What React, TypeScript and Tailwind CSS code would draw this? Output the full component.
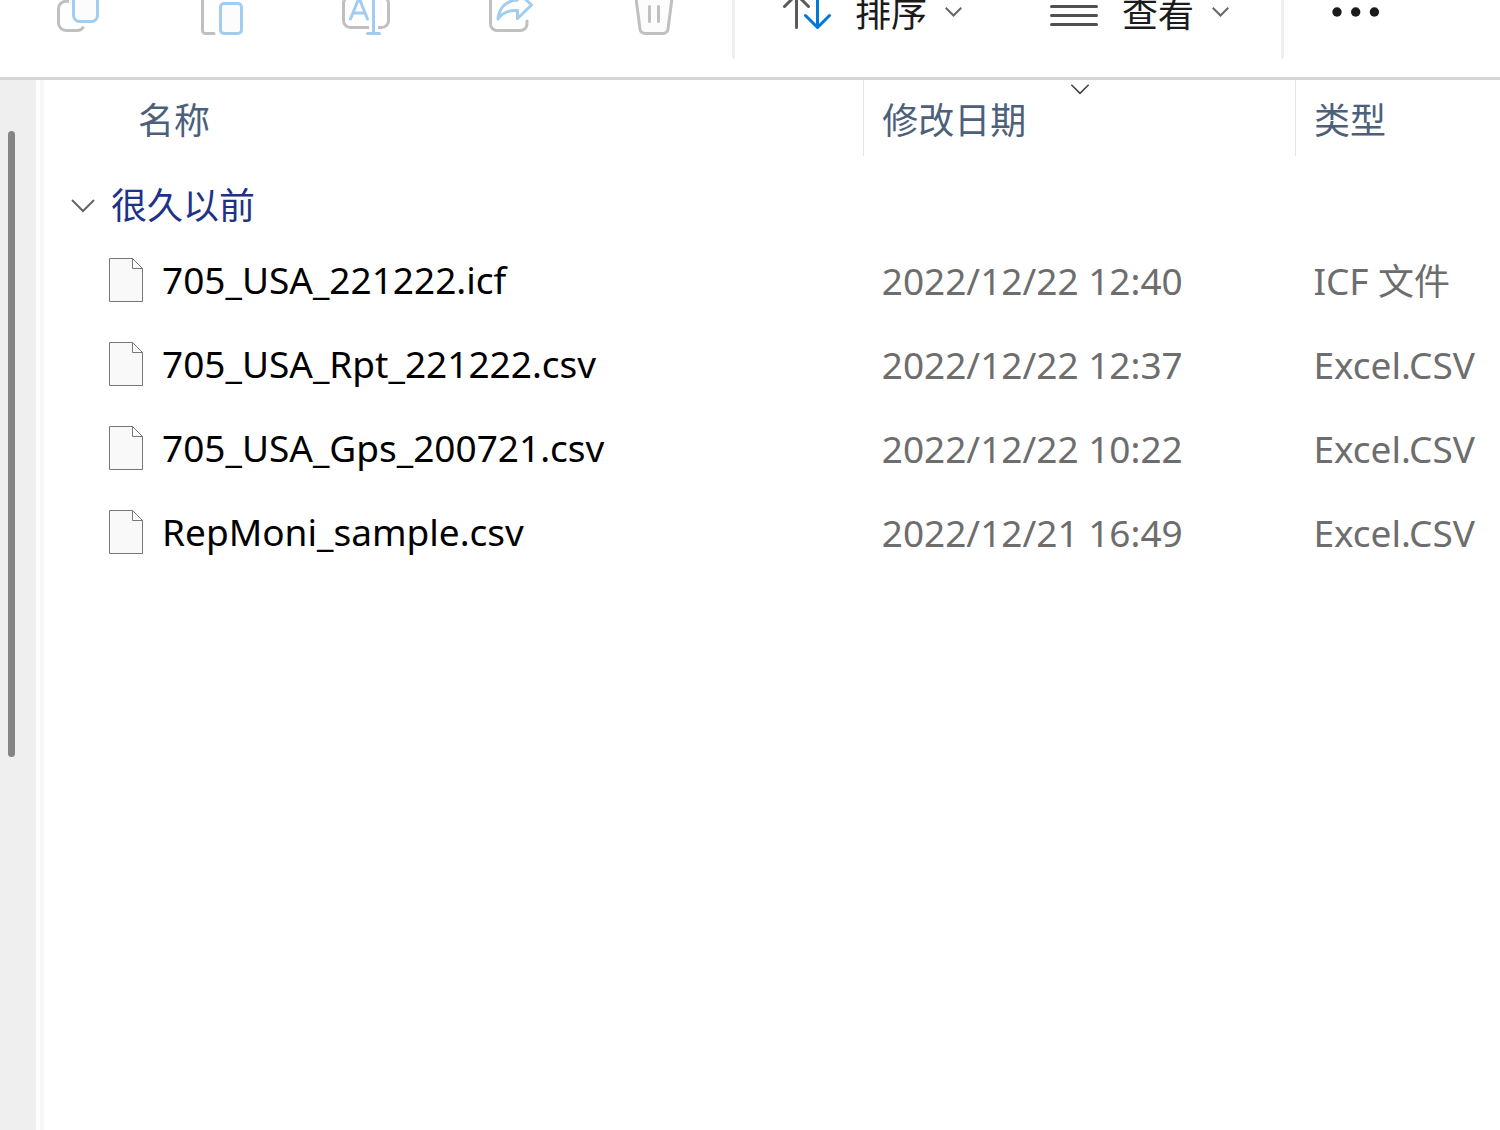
import type { ReactNode } from 'react';

const files = [
  { name: '705_USA_221222.icf', date: '2022/12/22 12:40', type: 'ICF', suffix: '文件' },
  { name: '705_USA_Rpt_221222.csv', date: '2022/12/22 12:37', type: 'Excel.CSV' },
  { name: '705_USA_Gps_200721.csv', date: '2022/12/22 10:22', type: 'Excel.CSV' },
  { name: 'RepMoni_sample.csv', date: '2022/12/21 16:49', type: 'Excel.CSV' },
];

function Icon({ children }: { children: ReactNode }) {
  return (
    <svg
      className="size-12 shrink-0"
      viewBox="0 0 48 48"
      fill="none"
      strokeWidth="3"
      strokeLinecap="round"
      strokeLinejoin="round"
      aria-hidden="true"
    >
      {children}
    </svg>
  );
}

const GRAY = '#c0c0c0';
const BLUE = '#a1cdf1';

function CopyIcon() {
  return (
    <Icon>
      <path d="M15 13.2h-3a7.5 7.5 0 0 0-7.5 7.5v14.3a7.5 7.5 0 0 0 7.5 7.5h11c3.500 0 5.500-1.500 6.500-4" stroke={GRAY} strokeLinecap="butt" />
      <rect x="19.500" y="1.500" width="24" height="32" rx="6" stroke={BLUE} fill="#fcfcfc" />
    </Icon>
  );
}

function PasteIcon() {
  return (
    <Icon>
      <path d="M16 45.500H7.500a3 3 0 0 1-3-3V7a3 3 0 0 1 3-3H34a3 3 0 0 1 3 3" stroke={GRAY} />
      <rect x="22.500" y="15.500" width="21" height="30" rx="3.500" stroke={BLUE} fill="#fcfcfc" />
    </Icon>
  );
}

function RenameIcon() {
  return (
    <Icon>
      <path d="M27 39.500H8.500a7 7 0 0 1-7-7v-17a7 7 0 0 1 7-7H27M36 8.500h3.500a7 7 0 0 1 7 7v17a7 7 0 0 1-7 7H36" stroke={GRAY} strokeLinecap="butt" />
      <path d="M8.500 31 16.500 11h1l8 20M12 25h10M31.500 2.500v43M25.500 45.500h12M25.500 2.500h12" stroke={BLUE} />
    </Icon>
  );
}

function ShareIcon() {
  return (
    <Icon>
      <path d="M15 5.500h-4a6.500 6.500 0 0 0-6.500 6.500v24a6.500 6.500 0 0 0 6.500 6.500h23.500A6.500 6.500 0 0 0 41 36v-3" stroke={GRAY} />
      <path d="M45.500 17 31.500 30.500v-8c-8-.5-15 2-19.500 8.500 1-11 8-18.500 19.500-19V4z" stroke={BLUE} />
    </Icon>
  );
}

function TrashIcon() {
  return (
    <Icon>
      <path d="M5.500 6.500 10 41a5 5 0 0 0 5 4.500h18a5 5 0 0 0 5-4.500l4.500-34.500M2 6.500h44" stroke={GRAY} fill="#fcfcfc" />
      <path d="M19.500 18.500v15M28.500 18.500v15" stroke={GRAY} />
    </Icon>
  );
}

function SortIcon() {
  return (
    <Icon>
      <path d="M13.500 39.500V6M1.500 18.500l12-12 12 12" stroke="#5a5a5a" />
      <path d="M34.500 6v33M22.500 27.500l12 12 12-12" stroke="#0078d7" />
    </Icon>
  );
}

function ViewIcon() {
  return (
    <Icon>
      <path d="M1.500 9.500h45M1.500 18.500h45M1.500 27.500h45M1.500 36.500h45" stroke="#505050" />
    </Icon>
  );
}

function MoreIcon() {
  return (
    <Icon>
      <g fill="#1b1b1b">
        <circle cx="5" cy="24" r="4.700" />
        <circle cx="23.700" cy="24" r="4.700" />
        <circle cx="42.400" cy="24" r="4.700" />
      </g>
    </Icon>
  );
}

function Chevron({ className, width }: { className: string; width: number }) {
  return (
    <svg className={className} viewBox="0 0 24 14" fill="none" stroke="currentColor" strokeWidth={width} aria-hidden="true">
      <path d="m1 1 11 11L23 1" />
    </svg>
  );
}

function FileIcon() {
  return (
    <svg className="h-11 w-9 shrink-0" viewBox="0 0 36 44" stroke="#777" aria-hidden="true">
      <path d="M1.500.5h23l10 10v33h-33z" fill="#f9f9f9" />
      <path d="M24.500.5v10h10z" fill="#fff" />
    </svg>
  );
}

const tools = [
  { label: '复制', icon: <CopyIcon /> },
  { label: '粘贴', icon: <PasteIcon /> },
  { label: '重命名', icon: <RenameIcon /> },
  { label: '共享', icon: <ShareIcon /> },
  { label: '删除', icon: <TrashIcon /> },
];

const menus = [
  { label: '排序', icon: <SortIcon /> },
  { label: '查看', icon: <ViewIcon /> },
];

export default function App() {
  return (
    <div className="flex min-h-screen flex-col overflow-hidden bg-white font-['Noto_Sans','Noto_Sans_CJK_SC',sans-serif] text-[37px] leading-[52px]">
      <header className="flex h-20 items-end overflow-hidden border-b-3 border-[#d5d5d5]">
        <div className="flex h-[130px] shrink-0 items-center pl-[54px]">
          <div className="flex gap-24">
            {tools.map((tool) => (
              <button key={tool.label} type="button" disabled aria-label={tool.label}>
                {tool.icon}
              </button>
            ))}
          </div>
          <div className="ml-[54px] h-[94px] w-[3px] rounded-full bg-[#efefef]" />
          <div className="flex gap-[88px] pr-[52px] pl-12">
            {menus.map((menu) => (
              <button key={menu.label} type="button" className="flex items-center text-[36px] text-[#1b1b1b]">
                {menu.icon}
                <span className="ml-6 pt-1">{menu.label}</span>
                <Chevron className="ml-[18px] h-[10px] w-[17px] text-[#6a6a6a]" width={3} />
              </button>
            ))}
          </div>
          <div className="h-[94px] w-[3px] rounded-full bg-[#efefef]" />
          <button type="button" aria-label="更多" className="ml-12">
            <MoreIcon />
          </button>
        </div>
      </header>

      <div className="flex flex-1">
        <aside className="flex w-9 shrink-0 bg-[#efefef] pt-[51px] pl-2">
          <div className="h-[626px] w-[7px] rounded-full bg-[#858585]" />
        </aside>
        <main className="ml-1 min-w-0 flex-1 border-l-4 border-[#f7f7f7]">
          <table className="w-full table-fixed text-left whitespace-nowrap">
            <thead>
              <tr className="h-[76px] text-[36px] text-[#4c607a]">
                <th scope="col" className="w-[56.3%] border-r border-[#e5e5e5] pt-1.5 pl-[94px] font-normal">
                  名称
                </th>
                <th scope="col" aria-sort="descending" className="relative w-[29.65%] border-r border-[#e5e5e5] pt-1.5 pl-[18px] font-normal">
                  <Chevron className="absolute top-1 left-1/2 h-[11px] w-[19px] -translate-x-1/2 text-[#444]" width={2} />
                  修改日期
                </th>
                <th scope="col" className="pt-1.5 pl-[18px] font-normal">
                  类型
                </th>
              </tr>
            </thead>
            <tbody>
              <tr className="h-[84px]">
                <th colSpan={3} scope="rowgroup" className="pt-4 pl-[27px] font-normal">
                  <button type="button" aria-expanded="true" className="flex items-center gap-4 text-[36px] text-[#1e3287]">
                    <Chevron className="h-[14px] w-6 text-[#666]" width={2} />
                    很久以前
                  </button>
                </th>
              </tr>
              {files.map((file) => (
                <tr key={file.name} className="h-[84px] text-[#6d6d6d]">
                  <td className="pb-1 pl-16">
                    <div className="flex items-center gap-[18px] text-black">
                      <FileIcon />
                      {file.name}
                    </div>
                  </td>
                  <td className="pb-0.5 pl-[18px]">{file.date}</td>
                  <td className="pb-0.5 pl-[18px]">
                    {file.type}
                    {file.suffix && <span className="text-[36px]"> {file.suffix}</span>}
                  </td>
                </tr>
              ))}
            </tbody>
          </table>
        </main>
      </div>
    </div>
  );
}
